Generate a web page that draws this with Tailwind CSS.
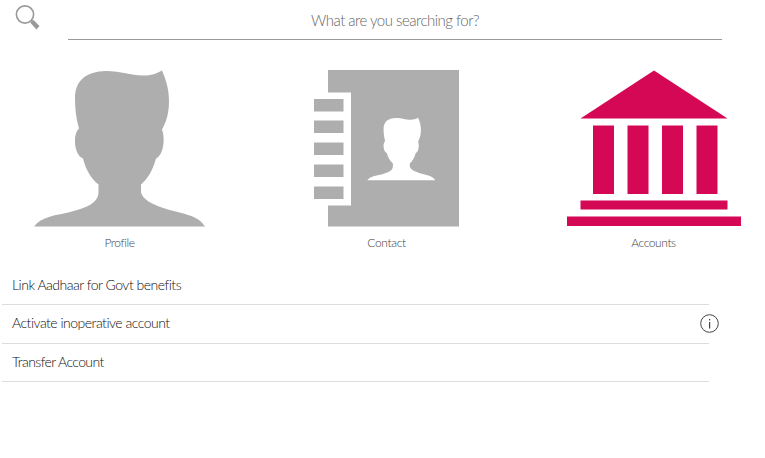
<!DOCTYPE html>
<html lang="en">

<head>
    <meta charset="UTF-8">
    <meta name="viewport" content="width=device-width, initial-scale=1.0">
    <title>Service search</title>
    <script src="https://cdn.jsdelivr.net/npm/@tailwindcss/browser@4"></script>
</head>

<body class="bg-white font-['Lato',sans-serif] font-light overflow-hidden">

    <!-- search -->
    <div class="flex items-start pl-[15px] pr-[43px]">
        <svg class="w-[25px] h-[25px] mt-[5px] shrink-0" viewBox="15 5 25 25">
            <circle cx="25" cy="14.5" r="8.6" fill="none" stroke="#999999" stroke-width="1.6" />
            <path d="M31.5 20.500 L33.500 20 L39.500 26 L36.500 29.500 L30.500 23 Z" fill="#999999" />
        </svg>
        <div class="ml-[28px] flex-1 h-[40px] border-b border-[#999999] flex items-center justify-center pt-[1px]">
            <input type="text" placeholder="What are you searching for?"
                class="w-full text-center text-[15px] tracking-[-0.5px] outline-none placeholder:text-[#666666]">
        </div>
    </div>

    <!-- tiles -->
    <div class="grid grid-cols-[223px_223px_223px] gap-x-[44px] pl-2 mt-[29.5px]">
        <div class="flex flex-col items-center">
            <svg class="w-[171px] h-[157px]" viewBox="34 69.5 171 157">
                <path fill="#aeaeae"
                    d="M162 70 C167 82 169 90 169 101 C169 113 166 122 162 129 C164 134 164 141 163 146 C162 152 159 157 156 158 C153 169 148 178 141 184 L141 192 C143 199 152 204 165 208 C180 213 198 214 205 226 L34 226 C41 216 56 215 72 211 C86 207 98 203 98.500 192 L98.500 184 C92 179 86 170 83 158 C78 156 75 149 75 141 C75 135 76 131 79 128 C76 118 75 108 75 98 C75 80 86 71 106 70.500 C122 70.500 130 75 143 75 C151 75 157 73 162 70 Z" />
            </svg>
            <span class="text-[12px] tracking-[-0.4px] text-[#444444] mt-[7px]">Profile</span>
        </div>
        <div class="flex flex-col items-center">
            <svg class="w-[145px] h-[157px]" viewBox="314 69.5 145 157">
                <path fill="#aeaeae" d="M328 69.500 H459 V226 H328 V205 H351 V92 H328 Z" />
                <rect x="314" y="98.500" width="29.500" height="12.500" fill="#aeaeae" />
                <rect x="314" y="120" width="29.500" height="12.500" fill="#aeaeae" />
                <rect x="314" y="142" width="29.500" height="12.500" fill="#aeaeae" />
                <rect x="314" y="164" width="29.500" height="12.500" fill="#aeaeae" />
                <rect x="314" y="186" width="29.500" height="12.500" fill="#aeaeae" />
                <path fill="#ffffff" transform="translate(353.800 89.300) scale(0.397 0.4)"
                    d="M162 70 C167 82 169 90 169 101 C169 113 166 122 162 129 C164 134 164 141 163 146 C162 152 159 157 156 158 C153 169 148 178 141 184 L141 192 C143 199 152 204 165 208 C180 213 198 214 205 226 L34 226 C41 216 56 215 72 211 C86 207 98 203 98.500 192 L98.500 184 C92 179 86 170 83 158 C78 156 75 149 75 141 C75 135 76 131 79 128 C76 118 75 108 75 98 C75 80 86 71 106 70.500 C122 70.500 130 75 143 75 C151 75 157 73 162 70 Z" />
            </svg>
            <span class="text-[12px] tracking-[-0.35px] text-[#444444] mt-[7px]">Contact</span>
        </div>
        <div class="flex flex-col items-center">
            <svg class="w-[174px] h-[157px]" viewBox="566.5 69.5 174 157">
                <path fill="#d50855" d="M653.500 70 L727 118 H580 Z" />
                <rect x="592.500" y="125" width="21" height="68.500" fill="#d50855" />
                <rect x="627" y="125" width="21" height="68.500" fill="#d50855" />
                <rect x="661.500" y="125" width="21" height="68.500" fill="#d50855" />
                <rect x="696" y="125" width="21" height="68.500" fill="#d50855" />
                <rect x="580" y="200" width="147" height="9" fill="#d50855" />
                <rect x="566.500" y="216" width="174" height="9.500" fill="#d50855" />
            </svg>
            <span class="text-[12px] tracking-[-0.4px] text-[#444444] mt-[7px]">Accounts</span>
        </div>
    </div>

    <!-- links -->
    <ul class="ml-[2px] w-[707px] mt-[15px] text-[14px] tracking-[-0.5px] text-[#111111]">
        <li class="h-[38.5px] flex items-center pl-[10px] pb-[2px] border-b border-[#dddddd]">Link Aadhaar for Govt benefits</li>
        <li class="relative h-[38.5px] flex items-center pl-[10px] pb-[2px] border-b border-[#dddddd]">
            Activate inoperative account
            <svg class="absolute right-[-10px] top-[9px] w-[19px] h-[19px]" viewBox="0 0 19 19">
                <circle cx="9.500" cy="9.500" r="8.800" fill="none" stroke="#444444" stroke-width="1" />
                <rect x="9" y="8" width="1.200" height="6.500" fill="#444444" />
                <rect x="9" y="5" width="1.200" height="1.400" fill="#444444" />
            </svg>
        </li>
        <li class="h-[38.5px] flex items-center pl-[10px] pb-[2px] tracking-[-0.6px] border-b border-[#dddddd]">Transfer Account</li>
    </ul>

</body>

</html>
